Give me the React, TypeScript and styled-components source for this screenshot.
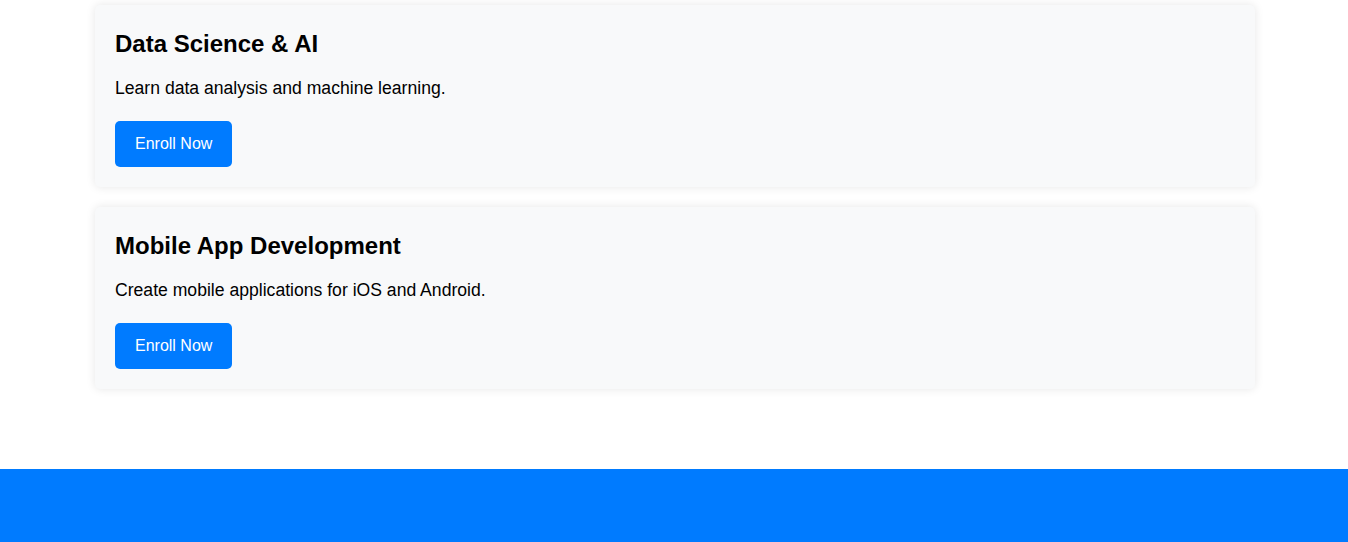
import React from "react";
import styled, { createGlobalStyle } from "styled-components";

const GlobalStyle = createGlobalStyle`
  html, body {
    margin: 0;
    padding: 0;
    background: #ffffff;
    font-family: "Liberation Sans", Arial, sans-serif;
    color: #000;
  }
`;

const Page = styled.div`
  display: flex;
  flex-direction: column;
  min-height: 542px;
`;

const HeaderEdge = styled.div`
  height: 0;
  box-shadow: 0 1px 4px rgba(0, 0, 0, 0.2);
  position: relative;
  z-index: 2;
`;

const Courses = styled.section`
  width: 1160px;
  margin: 5px 0 0 95px;
  display: flex;
  flex-direction: column;
  gap: 20px;
`;

const Card = styled.article`
  background: #f8f9fa;
  border-radius: 5px;
  box-shadow: 0 0 10px rgba(0, 0, 0, 0.1);
  padding: 20px;
  display: flex;
  flex-direction: column;
  align-items: flex-start;
`;

const Title = styled.h3`
  margin: 5px 0 0;
  font-size: 24px;
  font-weight: 700;
  line-height: 28px;
`;

const Desc = styled.p`
  margin: 19px 0 0;
  font-size: 17.6px;
  line-height: 22px;
`;

const Button = styled.button`
  margin-top: 22px;
  background: #007bff;
  color: #fff;
  border: none;
  border-radius: 5px;
  font-family: "Liberation Sans", Arial, sans-serif;
  font-size: 16px;
  height: 46px;
  padding: 0 20px;
  cursor: pointer;
`;

const Footer = styled.footer`
  margin-top: 80px;
  background: #007bff;
  height: 73px;
`;

const courses = [
  { title: "Data Science & AI", desc: "Learn data analysis and machine learning." },
  { title: "Mobile App Development", desc: "Create mobile applications for iOS and Android." },
];

export default function App() {
  return (
    <Page>
      <GlobalStyle />
      <HeaderEdge />
      <Courses>
        {courses.map((c) => (
          <Card key={c.title}>
            <Title>{c.title}</Title>
            <Desc>{c.desc}</Desc>
            <Button>Enroll Now</Button>
          </Card>
        ))}
      </Courses>
      <Footer />
    </Page>
  );
}
